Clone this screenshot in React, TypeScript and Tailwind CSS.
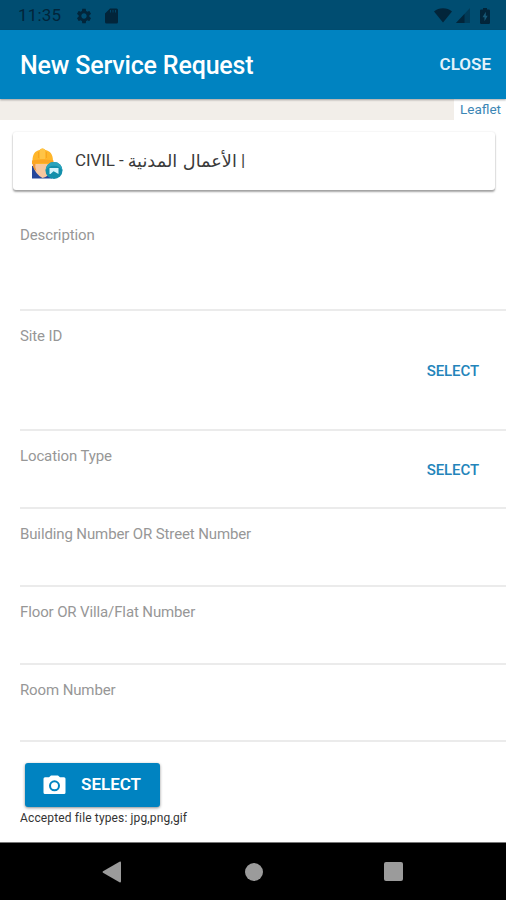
const fields = [
  { label: "Description", box: "h-[101px]" },
  { label: "Site ID", box: "h-[120px]", button: "mt-[35px]" },
  { label: "Location Type", box: "h-[78px]", button: "mt-[14px]" },
  { label: "Building Number OR Street Number", box: "h-[78px]" },
  { label: "Floor OR Villa/Flat Number", box: "h-[78px]" },
  { label: "Room Number", box: "h-[77px]" },
];

export default function App() {
  return (
    <div className="flex h-[900px] w-[506px] flex-col overflow-hidden bg-white font-['Roboto',sans-serif]">
      <StatusBar />
      <header className="relative z-10 flex h-[69px] shrink-0 items-center justify-between bg-[#0083c1] pl-5 pr-[15px] text-white shadow-[0_1px_2px_rgba(0,0,0,0.35)]">
        <h1 className="pt-[2px] text-[25px] font-medium tracking-[-0.17px]">New Service Request</h1>
        <button className="text-[17px] font-semibold text-[#e3f2fb]">CLOSE</button>
      </header>

      <div className="flex h-[21px] shrink-0 justify-end bg-[#f2eee9]">
        <a className="w-[52px] bg-white pl-[6px] text-[13.5px] leading-[21px] text-[#3c86b5]">Leaflet</a>
      </div>

      <main className="flex grow flex-col">
        <section className="ml-[13px] mr-[11px] mt-3 flex h-[58px] shrink-0 items-center rounded-[3px] bg-white pl-[17px] shadow-[0_2px_2px_rgba(0,0,0,0.35),0_0_2px_rgba(0,0,0,0.12)]">
          <WorkerIcon />
          <p className="ml-3 flex h-5 items-center whitespace-pre text-[17px] tracking-[-0.1px] text-[#3a3a3a]">
            <span>CIVIL - </span>
            <span dir="rtl" className="font-['DejaVu_Sans',sans-serif] text-[17.7px] tracking-normal">الأعمال المدنية</span>
            <span> |</span>
          </p>
        </section>

        <div className="mt-5 pl-5">
          {fields.map((f) => (
            <div key={f.label} className={`flex justify-between border-b-2 border-[#ebebeb] pr-[27px] pt-[15px] ${f.box}`}>
              <label className="text-[15px] leading-5 tracking-[-0.12px] text-[#979797]">{f.label}</label>
              {f.button && (
                <button className={`h-5 text-[15px] font-medium leading-5 tracking-[-0.1px] text-[#2384ba] ${f.button}`}>SELECT</button>
              )}
            </div>
          ))}
        </div>

        <div className="mt-[21px] pl-5">
          <button className="ml-[5px] flex h-11 w-[135px] items-center rounded-[3px] bg-[#0083c1] pl-[18px] text-[17px] font-semibold text-white shadow-[0_1px_3px_rgba(0,0,0,0.45)]">
            <CameraIcon />
            <span className="ml-[15px]">SELECT</span>
          </button>
          <p className="mt-[3px] text-[12px] leading-4 tracking-[0.14px] text-[#333]">Accepted file types: jpg,png,gif</p>
        </div>
      </main>

      <nav className="flex h-[58px] shrink-0 items-center border-t border-[#777] bg-black text-[#9b9b9b]">
        <svg className="ml-[102px]" width="20" height="22" viewBox="0 0 20 22" fill="currentColor">
          <path d="M1 10.2 17.5.8Q19 0 19 1.7v18.6q0 1.7-1.5.9L1 11.8Q0 11 1 10.2z" />
        </svg>
        <div className="ml-[123px] size-[18px] rounded-full bg-current" />
        <div className="ml-[121px] size-[19px] rounded-[2px] bg-current" />
      </nav>
    </div>
  );
}

function StatusBar() {
  return (
    <div className="flex h-[30px] shrink-0 items-center bg-[#004d71] pl-[18px] pr-[16px] pt-px text-[#02253a]">
      <span className="w-[44px] whitespace-nowrap text-[17px] tracking-[0.2px]">11:35</span>
      <svg className="ml-[13px]" width="18" height="18" viewBox="0 0 24 24" fill="currentColor">
        <path d="M19.14 12.94c.04-.3.06-.61.06-.94 0-.32-.02-.64-.07-.94l2.03-1.58c.18-.14.23-.41.12-.61l-1.92-3.32c-.12-.22-.37-.29-.59-.22l-2.39.96c-.5-.38-1.03-.7-1.62-.94l-.36-2.54c-.04-.24-.24-.41-.48-.41h-3.84c-.24 0-.43.17-.47.41l-.36 2.54c-.59.24-1.13.57-1.62.94l-2.39-.96c-.22-.08-.47 0-.59.22L2.74 8.87c-.12.21-.08.47.12.61l2.03 1.58c-.05.3-.09.63-.09.94s.02.64.07.94l-2.03 1.58c-.18.14-.23.41-.12.61l1.92 3.32c.12.22.37.29.59.22l2.39-.96c.5.38 1.03.7 1.62.94l.36 2.54c.05.24.24.41.48.41h3.84c.24 0 .44-.17.47-.41l.36-2.54c.59-.24 1.13-.56 1.62-.94l2.39.96c.22.08.47 0 .59-.22l1.92-3.32c.12-.22.07-.47-.12-.61l-2.01-1.58zM12 15.6c-1.98 0-3.6-1.62-3.6-3.6s1.62-3.6 3.6-3.6 3.6 1.62 3.6 3.6-1.62 3.6-3.6 3.6z" />
      </svg>
      <svg className="ml-3" width="13" height="16" viewBox="0 0 13 16" fill="currentColor">
        <path d="M5 .5h6.5A1.5 1.5 0 0 1 13 2v12a1.5 1.5 0 0 1-1.5 1.5h-10A1.5 1.5 0 0 1 0 14V5.5z" />
        <path d="M5.5 2v2.5M8 2v2.5M10.5 2v2.5" stroke="#004d71" strokeWidth="0.8" />
      </svg>
      <svg className="ml-auto" width="18" height="15" viewBox="0 0 18 15" fill="currentColor">
        <path d="M9 14.5 0 3.4C2.5 1.3 5.6.3 9 .3s6.5 1 9 3.1z" />
      </svg>
      <svg className="ml-1" width="14" height="15" viewBox="0 0 14 15" fill="currentColor">
        <path d="M0 15 14 0v15z" opacity="0.45" />
        <path d="M0 15 8.5 5.9V15z" />
      </svg>
      <svg className="ml-[10px]" width="10" height="16" viewBox="0 0 10 16" fill="currentColor">
        <path d="M3 0h4v1.5h1.7A1.3 1.3 0 0 1 10 2.8v11.9a1.3 1.3 0 0 1-1.3 1.3H1.3A1.3 1.3 0 0 1 0 14.7V2.8a1.3 1.3 0 0 1 1.3-1.3H3z" />
        <path d="M5.8 3.8 2.5 9.3h2v4l3.2-5.5H5.800z" fill="#175876" />
      </svg>
    </div>
  );
}

function WorkerIcon() {
  return (
    <svg className="mt-1" width="33" height="34" viewBox="0 0 33 34">
      <path d="M2 20v12.5h20V20z" fill="#26469a" />
      <path d="M3.500 16h18v6q-1 8-9 10Q5 28 3.500 20z" fill="#f8c79f" />
      <path d="M2.500 17h3q-1 4 1 8-4-2-4-8zM19 17h3.500v4H19z" fill="#ef9838" />
      <path d="M2.500 15C2.500 8 5 5 9.500 4q3-3 6 0C20 5 23 8 23 15v3H2.500z" fill="#ffb62a" />
      <path d="M10 3.500q2.500-2 5 0V13h-5z" fill="#ffc446" />
      <path d="M8.500 6v6M16.500 6v6" stroke="#f7a520" />
      <path d="M2 14.500q10.500-2 21.500 0V18q-11-2-21.500 0z" fill="#fba524" />
      <circle cx="24" cy="24.500" r="8.500" fill="#138fab" />
      <path d="M15.500 24.500a8.500 8.500 0 0 1 17 0 10 10 0 0 0-17 0" fill="#2aa3bc" />
      <path d="M19.500 22h9v6l-3-1.800-2-1-3 2.800h-1z" fill="#d5f3fb" />
    </svg>
  );
}

function CameraIcon() {
  return (
    <svg width="23" height="20" viewBox="0 0 23 20" fill="currentColor">
      <path
        fillRule="evenodd"
        d="M8 .5h7l2 1.7h4a1.5 1.5 0 0 1 1.5 1.500v13.800A1.500 1.500 0 0 1 21 19H2a1.500 1.500 0 0 1-1.500-1.500V3.700A1.500 1.500 0 0 1 2 2.200h4zM11.500 5.300a5.500 5.500 0 1 0 0 11 5.500 5.500 0 0 0 0-11z"
      />
      <circle cx="11.500" cy="10.800" r="3.500" />
    </svg>
  );
}
